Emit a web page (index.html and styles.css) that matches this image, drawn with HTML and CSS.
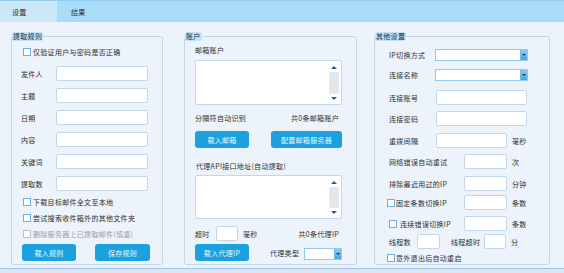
FILE: index.html
```html
<!DOCTYPE html>
<html lang="zh-CN">
<head>
<meta charset="utf-8">
<link rel="stylesheet" href="styles.css">
</head>
<body>
<div class="tabs">
  <div class="tab tab-active">设置</div>
  <div class="tab tab-plain">结果</div>
</div>
<main class="panel">
  <fieldset class="group g-rules">
    <legend>提取规则</legend>
    <div class="inner">
      <label class="check c-first"><input type="checkbox">仅验证用户与密码是否正确</label>
      <div class="field"><span class="lbl l35">发件人</span><input class="text w92"></div>
      <div class="field"><span class="lbl l35">主题</span><input class="text w92"></div>
      <div class="field"><span class="lbl l35">日期</span><input class="text w92"></div>
      <div class="field"><span class="lbl l35">内容</span><input class="text w92"></div>
      <div class="field"><span class="lbl l35">关键词</span><input class="text w92"></div>
      <div class="field"><span class="lbl l35">提取数</span><input class="text w92"></div>
      <label class="check c-list c-gap"><input type="checkbox">下载目标邮件全文至本地</label>
      <label class="check c-list"><input type="checkbox">尝试搜索收件箱外的其他文件夹</label>
      <label class="check c-list disabled"><input type="checkbox" disabled>删除服务器上已提取邮件(慎重)</label>
      <div class="btn-row rules-btns">
        <button class="btn w54">载入规则</button>
        <button class="btn w55">保存规则</button>
      </div>
    </div>
  </fieldset>

  <fieldset class="group g-account">
    <legend>账户</legend>
    <div class="inner">
      <div class="caption cap-mail">邮箱账户</div>
      <div class="area area-mail">
        <div class="area-text"></div>
        <div class="scroll"><span class="arr up"></span><span class="thumb"></span><span class="arr down"></span></div>
      </div>
      <div class="info"><span>分隔符自动识别</span><span>共0条邮箱账户</span></div>
      <div class="btn-row mail-btns">
        <button class="btn w54">载入邮箱</button>
        <button class="btn w71">配置邮箱服务器</button>
      </div>
      <div class="caption cap-proxy">代理API接口地址(自动提取)</div>
      <div class="area area-proxy">
        <div class="area-text"></div>
        <div class="scroll"><span class="arr up"></span><span class="thumb"></span><span class="arr down"></span></div>
      </div>
      <div class="field timeout-row"><span class="lbl l21">超时</span><input class="text w22"><span class="unit">毫秒</span><span class="count">共0条代理IP</span></div>
      <div class="proxy-row">
        <button class="btn w54">载入代理IP</button>
        <span class="ptype">代理类型</span>
        <span class="select w38"><span class="drop"></span></span>
      </div>
    </div>
  </fieldset>

  <fieldset class="group g-other">
    <legend>其他设置</legend>
    <div class="inner">
      <div class="field sel-row r-first"><span class="lbl l46">IP切换方式</span><span class="select w93"><span class="drop"></span></span></div>
      <div class="field sel-row r-8"><span class="lbl l46">连接名称</span><span class="select w93"><span class="drop"></span></span></div>
      <div class="field r-9"><span class="lbl l47">连接账号</span><input class="text w91"></div>
      <div class="field r-6"><span class="lbl l47">连接密码</span><input class="text w91"></div>
      <div class="field r-7"><span class="lbl l47">重拨间隔</span><input class="text w71"><span class="unit">毫秒</span></div>
      <div class="field r-6"><span class="lbl l75">网络错误自动重试</span><input class="text w43"><span class="unit">次</span></div>
      <div class="field r-7"><span class="lbl l75">排除最近用过的IP</span><input class="text w43"><span class="unit">分钟</span></div>
      <div class="field r-4"><label class="check lbl ck-a"><input type="checkbox">固定条数切换IP</label><input class="text w43"><span class="unit">条数</span></div>
      <div class="field r-6"><label class="check lbl ck-b"><input type="checkbox">连续错误切换IP</label><input class="text w43"><span class="unit">条数</span></div>
      <div class="field r-3"><span class="lbl l28">线程数</span><input class="text w23"><span class="lbl l33 gap11">线程超时</span><input class="text w22"><span class="unit">分</span></div>
      <label class="check restart"><input type="checkbox">意外退出后自动重启</label>
    </div>
  </fieldset>
</main>
</body>
</html>
```

FILE: styles.css
```css
* { box-sizing: border-box; }
html, body { margin: 0; }
body {
  width: 564px;
  height: 273px;
  overflow: hidden;
  background: #dbe6f2;
  font-family: "Noto Sans CJK SC", "Noto Sans", sans-serif;
  font-size: 7px;
  letter-spacing: 0.3px;
  color: #2e2e2e;
}

/* tabs */
.tabs {
  display: flex;
  height: 22px;
  background: #a8dcf9;
  border-top: 1px solid #93ccef;
}
.tab { display: flex; align-items: center; height: 100%; }
.tab-active { width: 57px; padding-left: 12px; background: #cbe8f9; }
.tab-plain { padding-left: 14px; }

/* panel */
.panel {
  display: flex;
  align-items: flex-start;
  height: 247px;
  padding: 10px 0 0 11px;
  background: #edf3fa;
  border-bottom: 1px solid #a2c4e4;
}

.group {
  margin: 0;
  padding: 0;
  min-width: 0;
  height: 233px;
  border: 1px solid #c4d5e8;
  border-radius: 3px;
}
.group legend {
  padding: 0 1px;
  height: 9px;
  line-height: 9px;
  background: #bfe4f9;
  border-radius: 2px;
  color: #1f2a36;
}
.g-rules { width: 152px; }
.g-account { width: 173px; margin-left: 21px; }
.g-other { width: 176px; margin-left: 17px; }

.inner { display: flex; flex-direction: column; }
.g-rules .inner { padding-left: 9px; }
.g-account .inner { padding: 0 14px 0 10px; }
.g-other .inner { padding-left: 14px; }

/* generic rows */
.field { display: flex; align-items: center; height: 15px; margin-top: 7px; flex: none; }
.lbl { flex: none; white-space: nowrap; }
.l21 { width: 21px; }
.l28 { width: 28px; }
.l33 { width: 33px; }
.l35 { width: 35px; }
.l46 { width: 46px; }
.l47 { width: 47px; }
.l75 { width: 75px; }
.gap11 { margin-left: 11px; }

.text {
  height: 15px;
  margin: 0;
  padding: 0;
  border: 1px solid #c3d6ea;
  border-radius: 2px;
  background: #fff;
  flex: none;
}
.w22 { width: 22px; }
.w23 { width: 23px; }
.w43 { width: 43px; }
.w71 { width: 71px; }
.w91 { width: 91px; }
.w92 { width: 92px; }
.w93 { width: 93px; }
.w38 { width: 38px; }
.w54 { width: 54px; }
.w55 { width: 55px; }

.unit { margin-left: 5px; white-space: nowrap; }

/* checkboxes */
.check { display: flex; align-items: center; white-space: nowrap; flex: none; }
.check input {
  appearance: none;
  -webkit-appearance: none;
  width: 8px;
  height: 8px;
  margin: 0 2px 0 0;
  border: 1px solid #75acd8;
  background: #fff;
  flex: none;
}
.check.disabled { color: #9c9c9c; }
.check.disabled input { border-color: #bdbdbd; }
.c-first { height: 14px; margin-top: 4px; padding-left: 2px; }
.c-list { height: 16px; padding-left: 2px; }
.c-gap { margin-top: 3px; }

/* buttons */
.btn {
  height: 17px;
  margin: 0;
  padding: 0;
  border: none;
  border-radius: 3px;
  background: #1ba2de;
  color: #e9f7ff;
  font: inherit;
  letter-spacing: inherit;
  flex: none;
}
.btn-row { display: flex; flex: none; }
.rules-btns { margin-top: 2px; padding-left: 1px; gap: 19px; }
.mail-btns { margin-top: 8px; justify-content: space-between; }

/* account group */
.caption { height: 10px; line-height: 10px; white-space: nowrap; flex: none; }
.cap-mail { margin-top: 4px; }
.cap-proxy { margin-top: 13px; padding-left: 1px; }
.area {
  display: flex;
  border: 1px solid #c3d6ea;
  border-radius: 2px;
  background: #fff;
  flex: none;
}
.area-mail { height: 45px; margin-top: 5px; }
.area-proxy { height: 44px; margin-top: 4px; }
.area-text { flex: 1; }
.scroll {
  width: 10px;
  margin-right: 2px;
  display: flex;
  flex-direction: column;
  align-items: center;
  padding: 5px 0 4px;
}
.arr { width: 0; height: 0; border-left: 3px solid transparent; border-right: 3px solid transparent; flex: none; }
.arr.up { border-bottom: 3px solid #1d5e9e; }
.arr.down { border-top: 3px solid #1d5e9e; }
.thumb { flex: 1; width: 10px; margin: 3px 0; background: #e3e7ec; border-radius: 2px; }

.info { display: flex; justify-content: space-between; height: 10px; line-height: 10px; margin-top: 8px; padding-right: 3px; white-space: nowrap; flex: none; }
.timeout-row { margin-top: 7px; }
.count { margin-left: auto; padding-right: 3px; white-space: nowrap; }
.proxy-row { display: flex; align-items: center; height: 17px; margin-top: 3px; flex: none; }
.ptype { margin-left: 21px; width: 34px; white-space: nowrap; margin-top: 1px; }

.select {
  display: flex;
  justify-content: flex-end;
  height: 12px;
  border: 1px solid #95c9ee;
  background: #fff;
  flex: none;
}
.proxy-row .select { margin-top: 2px; }
.drop {
  width: 7px;
  height: 100%;
  background: linear-gradient(#8ccbf1, #4aa3dc);
  border-left: 1px solid #79b9e6;
  position: relative;
}
.drop::after {
  content: "";
  position: absolute;
  left: 1px;
  top: 4px;
  border-left: 2px solid transparent;
  border-right: 2px solid transparent;
  border-top: 2px solid #1b3f66;
}

/* other group */
.sel-row { height: 12px; }
.r-first { margin-top: 8px; }
.r-8 { margin-top: 8px; }
.r-9 { margin-top: 9px; }
.r-6 { margin-top: 6px; }
.r-7 { margin-top: 7px; }
.r-4 { margin-top: 4px; }
.r-3 { margin-top: 3px; }
.ck-a { margin-left: -2px; width: 77px; }
.ck-a input { margin-right: 1px; }
.ck-b { width: 75px; }
.ck-b input { margin-right: 3px; }
.restart { height: 12px; margin-top: 3px; margin-left: -2px; }
.restart input { margin-right: 1px; }
```
